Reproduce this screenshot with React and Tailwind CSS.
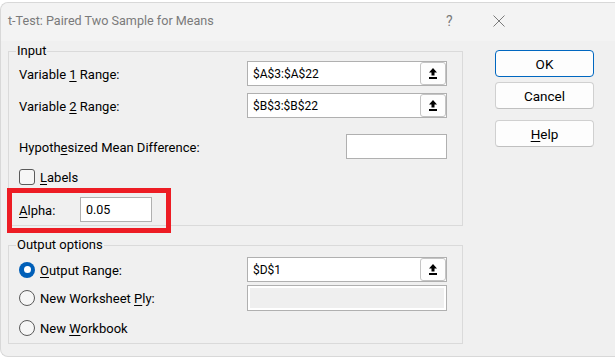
import React from "react";

const U = ({ children }) => <span className="underline underline-offset-[2px]">{children}</span>;

function UploadIcon() {
  return (
    <svg width="8" height="11" viewBox="0 0 8 11" className="block">
      <polygon points="4,0 8,4.5 5.5,4.5 5.5,7.5 2.5,7.5 2.5,4.5 0,4.5" fill="#000" />
      <rect x="0" y="9" width="8" height="2" fill="#000" />
    </svg>
  );
}

function RefField({ value }) {
  return (
    <div className="flex h-[25px] w-[200px] border border-[#b0b0b0] bg-white">
      <div className="flex flex-1 items-center pl-[5px] pt-[1px] text-[12px] text-black">{value}</div>
      <div className="flex w-[26px] items-center justify-center rounded-[3px] border border-[#c4c4c4] bg-[#fdfdfd]">
        <UploadIcon />
      </div>
    </div>
  );
}

function Radio({ checked }) {
  return checked ? (
    <div className="flex h-[16px] w-[16px] items-center justify-center rounded-full bg-[#005fb8]">
      <div className="h-[7px] w-[7px] rounded-full bg-white" />
    </div>
  ) : (
    <div className="h-[16px] w-[16px] rounded-full border border-[#5a5a5a] bg-[#f6f6f6]" />
  );
}

function Btn({ children, primary }) {
  return (
    <div
      className={
        "flex h-[27px] w-[99px] items-center justify-center rounded-[4px] bg-[#fdfdfd] pt-[1px] text-[13.5px] text-black " +
        (primary ? "border border-[#0067c0]" : "border border-[#d0d0d0] border-b-[#c0c0c0]")
      }
    >
      {children}
    </div>
  );
}

export default function App() {
  return (
    <div
      className="h-[359px] w-[615px] overflow-hidden bg-white"
      style={{ fontFamily: 'Roboto, Lato, sans-serif' }}
    >
      <div className="mt-[2px] h-[355px] w-[620px] rounded-l-[8px] border-l border-t border-b border-[#d8d8d8] bg-[#f0f0f0]">
        {/* title bar */}
        <div className="flex h-[38px] items-center rounded-tl-[8px] bg-[#f3f3f3] pb-[2px] pl-[7px]">
          <div className="flex-1 text-[12.6px] text-[#7a7a7a]">t-Test: Paired Two Sample for Means</div>
          <div className="w-[6px] text-[14px] text-[#7a7a7a]">?</div>
          <svg width="12" height="12" viewBox="0 0 12 12" className="ml-[41px] mr-[115px]">
            <path d="M0.5 0.5 L11.5 11.5 M11.5 0.5 L0.5 11.5" stroke="#7a7a7a" strokeWidth="1" />
          </svg>
        </div>
        {/* body */}
        <div className="flex pl-[7px] text-[13px] text-black">
          <div className="relative w-[455px]">
            <fieldset className="border border-[#dadada] pb-[3px] pl-[10px] pr-[15px]">
              <legend className="ml-[-3px] px-px leading-[20px]">Input</legend>
              <div className="flex h-[25px] items-center justify-between">
                <span className="pt-[2px]">Variable <U>1</U> Range:</span>
                <RefField value="$A$3:$A$22" />
              </div>
              <div className="mt-[7px] flex h-[25px] items-center justify-between">
                <span className="pt-[2px]">Variable <U>2</U> Range:</span>
                <RefField value="$B$3:$B$22" />
              </div>
              <div className="mt-[16px] flex h-[25px] items-center justify-between">
                <span className="pt-[2px]">Hypoth<U>e</U>sized Mean Difference:</span>
                <div className="h-[25px] w-[101px] border border-[#b0b0b0] bg-white" />
              </div>
              <div className="mt-[10px] flex h-[16px] items-center">
                <div className="h-[16px] w-[16px] rounded-[3px] border border-[#5a5a5a] bg-[#f6f6f6]" />
                <span className="ml-[5px] pt-[2px]"><U>L</U>abels</span>
              </div>
              <div className="mt-[12px] flex h-[25px] items-center">
                <span className="w-[61px] pt-[2px]"><U>A</U>lpha:</span>
                <div className="flex h-[25px] w-[72px] items-center border border-[#b0b0b0] bg-white pl-[5px] pt-[1px] text-[12.5px]">
                  0.05
                </div>
              </div>
            </fieldset>
            <div className="pointer-events-none absolute left-[-1px] top-[147px] h-[45px] w-[164px] border-[5px] border-[#ed1c24]" />
            <fieldset className="mt-[9px] border border-[#dadada] pb-[5px] pl-[10px] pr-[15px]">
              <legend className="ml-[-3px] px-px leading-[20px]">Output options</legend>
              <div className="mt-[2px] flex h-[25px] items-center justify-between">
                <div className="flex items-center">
                  <Radio checked />
                  <span className="ml-[5px] pt-[2px]"><U>O</U>utput Range:</span>
                </div>
                <RefField value="$D$1" />
              </div>
              <div className="mt-[3px] flex h-[26px] items-center justify-between">
                <div className="flex items-center">
                  <Radio />
                  <span className="ml-[5px] pt-[2px]">New Worksheet <U>P</U>ly:</span>
                </div>
                <div className="flex h-[26px] w-[200px] border border-[#b0b0b0] bg-white p-[2px]">
                  <div className="flex-1 bg-[#efefef]" />
                </div>
              </div>
              <div className="mt-[7px] flex h-[20px] items-center">
                <Radio />
                <span className="ml-[5px] pt-[2px]">New <U>W</U>orkbook</span>
              </div>
            </fieldset>
          </div>
          <div className="ml-[32px] flex flex-col pt-[9px]">
            <Btn primary>OK</Btn>
            <div className="mt-[5px]"><Btn>Cancel</Btn></div>
            <div className="mt-[11px]"><Btn><U>H</U>elp</Btn></div>
          </div>
        </div>
      </div>
    </div>
  );
}
